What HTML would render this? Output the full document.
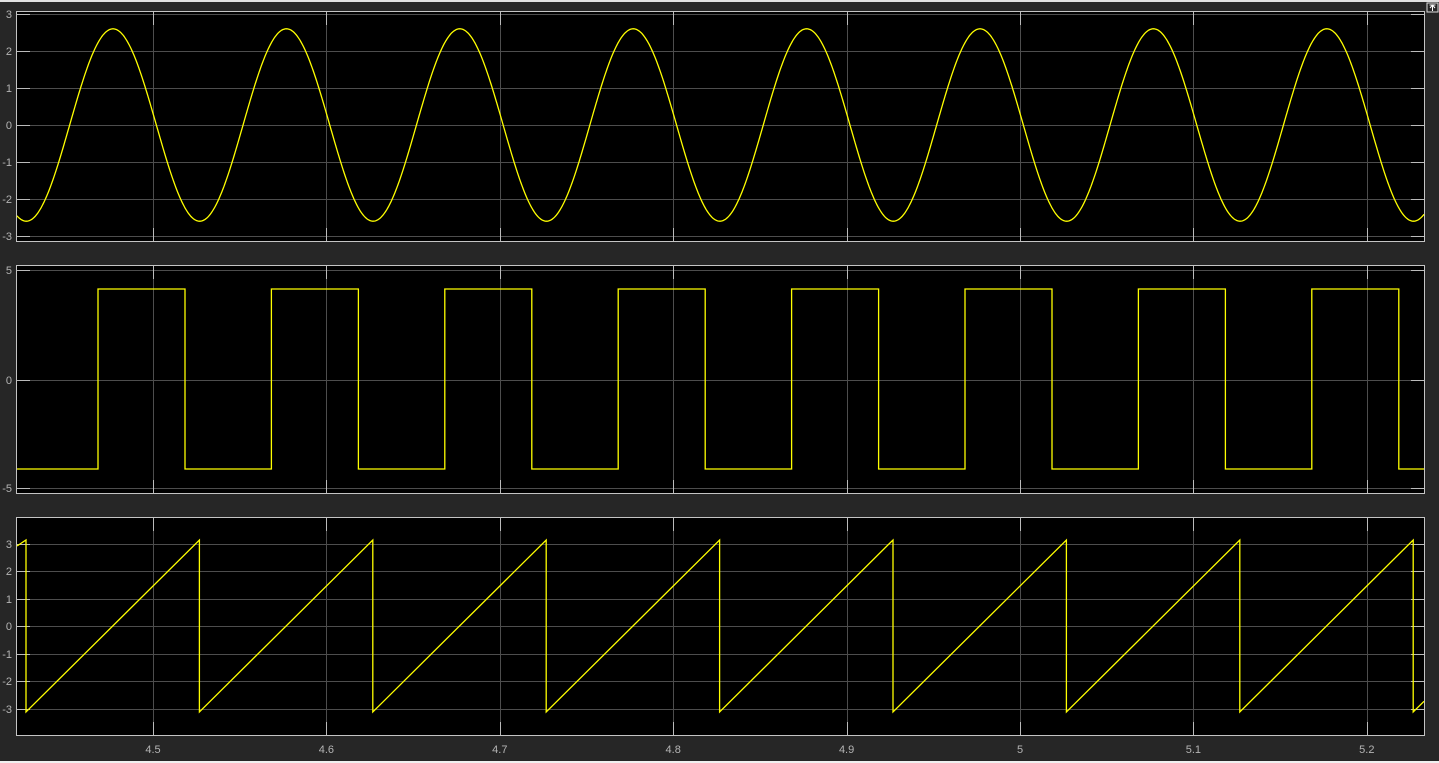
<!DOCTYPE html><html><head><style>
html,body{margin:0;padding:0;background:#262626;width:1439px;height:763px;overflow:hidden}
svg text{font-family:"Liberation Sans",sans-serif;font-size:11px;fill:#b4b4b4}
</style></head><body>
<svg id="s" width="1439" height="763" xmlns="http://www.w3.org/2000/svg">
<rect width="1439" height="763" fill="#262626"/>
<rect x="0" y="0" width="1439" height="2" fill="#e0e0e0"/>
<rect x="0" y="761" width="1439" height="2" fill="#f0f0f0"/>
<rect x="1427" y="3" width="11" height="9" fill="#262626" stroke="#ddd" stroke-width="1"/>
<path d="M1432.5 5v6M1430 8l2.5-3 2.5 3M1429.5 5h6" stroke="#fff" fill="none"/>
<g id="g"></g>
</svg>
<script>
var g=document.getElementById('g'),NS='http://www.w3.org/2000/svg';
function el(t,a,txt){var e=document.createElementNS(NS,t);for(var k in a)e.setAttribute(k,a[k]);if(txt!=null)e.textContent=txt;g.appendChild(e);return e}
var X0=16,X1=1425,px=1734;
function xv(t){return 153+(t-4.5)*px}
var xt=[4.5,4.6,4.7,4.8,4.9,5,5.1,5.2];
var panels=[
 {y1:242,ticks:[[3,14],[2,51],[1,88],[0,125],[-1,162],[-2,199],[-3,236]],top:11},
 {top:265,y1:494,ticks:[[5,270],[0,380],[-5,488]]},
 {top:517,y1:736,ticks:[[3,544],[2,571],[1,599],[0,626],[-1,654],[-2,681],[-3,709]]}
];
panels.forEach(function(p,i){
 el('rect',{x:X0,y:p.top,width:X1-X0,height:p.y1-p.top,fill:'#000'});
 p.ticks.forEach(function(t){
  el('line',{x1:X0,x2:X1,y1:t[1]+.5,y2:t[1]+.5,stroke:'#4d4d4d'});
  el('line',{x1:X0,x2:X0+14,y1:t[1]+.5,y2:t[1]+.5,stroke:'#bbb'});
  el('line',{x1:X1-14,x2:X1,y1:t[1]+.5,y2:t[1]+.5,stroke:'#bbb'});
  el('text',{x:12,y:t[1]+4,'text-anchor':'end'},String(t[0]));
 });
 xt.forEach(function(t){var x=Math.round(xv(t))+.5;
  el('line',{x1:x,x2:x,y1:p.top,y2:p.y1,stroke:'#4d4d4d'});
  el('line',{x1:x,x2:x,y1:p.top,y2:p.top+14,stroke:'#bbb'});
  el('line',{x1:x,x2:x,y1:p.y1-14,y2:p.y1,stroke:'#bbb'});
 });
 el('rect',{x:X0+.5,y:p.top+.5,width:X1-X0-1,height:p.y1-p.top-1,fill:'none',stroke:'#c4c4c4'});
});
xt.forEach(function(t){el('text',{x:xv(t),y:753,'text-anchor':'middle'},String(t))});
var P=173.4,pts=[],x;
for(x=X0+1;x<X1;x+=1){pts.push(x+','+(125-2.6*37*Math.cos(2*Math.PI*(x-113)/P)).toFixed(1))}
el('polyline',{points:pts.join(' '),fill:'none',stroke:'#ffff00','stroke-width':1.3});
var d='M'+(X0+1)+' 469';var r=98-P;
for(var k=0;k<10;k++){var a=r+k*P,b=a+87;if(a>X0&&a<X1-1)d+=' L'+a+' 469 L'+a+' 289';if(b>X0&&b<X1-1)d+=' L'+b+' 289 L'+b+' 469';}
d+=' L'+(X1-1)+' 469';
el('path',{d:d,fill:'none',stroke:'#ffff00','stroke-width':1.3});
var d2='M'+(X0+1)+' 546';
for(var k=0;k<10;k++){var dx=26+k*P;if(dx>=X1-1){d2+=' L'+(X1-1)+' '+(712-172*((X1-1-(dx-P))/P)).toFixed(1);break;}
 d2+=' L'+dx+' 540 L'+dx+' 712';}
el('path',{d:d2,fill:'none',stroke:'#ffff00','stroke-width':1.3});
</script>
</body></html>
